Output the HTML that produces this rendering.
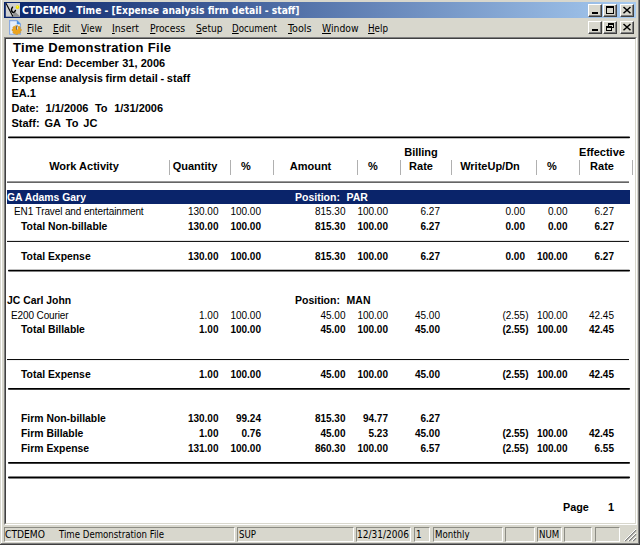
<!DOCTYPE html><html><head><meta charset="utf-8"><title>CTDEMO - Time - [Expense analysis firm detail - staff]</title><style>
html,body{margin:0;padding:0}
body{width:640px;height:545px;overflow:hidden;background:#d8d7cd;position:relative;font-family:"Liberation Sans",sans-serif;color:#000}
div,span{position:absolute;white-space:nowrap;box-sizing:border-box}
.ui{font-family:"DejaVu Sans Condensed","DejaVu Sans","Liberation Sans",sans-serif;font-size:11px;line-height:13px}
.r{font-family:"Liberation Sans",sans-serif;font-size:11px;line-height:13px}
.b{font-weight:bold}
.n{text-align:right}
.c{text-align:center}
.vs{background:#b0b0b0;width:1px;top:160px;height:15px}
.btn{background:#d8d7cd;border:1px solid;border-color:#fff #404040 #404040 #fff;box-shadow:inset -1px -1px 0 #808080}
u{text-decoration:underline}
</style></head><body>
<div style="left:1px;top:0;width:1px;height:544px;background:#fff"></div>
<div style="left:638px;top:0;width:1px;height:545px;background:#808080"></div>
<div style="left:639px;top:0;width:1px;height:545px;background:#404040"></div>
<div style="left:0;top:544px;width:640px;height:1px;background:#404040"></div>
<div style="left:1px;top:543px;width:638px;height:1px;background:#808080"></div>
<div style="left:4px;top:2px;width:632px;height:16px;background:linear-gradient(to right,#0a246a 0%,#a6caf0 100%)"></div>
<svg style="position:absolute;left:5px;top:3px" width="15" height="14" viewBox="0 0 15 14"><rect x="0.8" y="0" width="14.200" height="13.700" fill="#d0d0d0"/><polygon points="8.9,7.7 15,13.3 15,13.7 7.9,13.7" fill="#8e8e8e"/><path d="M1 0.3 L7.9 13.500" stroke="#000" stroke-width="1.100" fill="none"/><path d="M7.5 4.200 Q6.1 6.300 6.5 7.400 Q7.500 9.900 8.700 9.300 Q9.900 8.700 10.400 7.400" stroke="#000" stroke-width="1.500" fill="none" stroke-linecap="round"/><circle cx="12.500" cy="4.100" r="1.850" fill="#f4e200"/><circle cx="12.300" cy="3.800" r="0.800" fill="#fff45a"/></svg>
<div class="ui b" style="left:21.5px;top:4px;color:#fff;font-size:11px;transform:scaleX(0.9293);transform-origin:0 0;">CTDEMO - Time - [Expense analysis firm detail - staff]</div>
<div class="btn" style="left:588px;top:4px;width:14px;height:13px"></div>
<div style="left:592px;top:12px;width:6px;height:2px;background:#000"></div>
<div class="btn" style="left:603px;top:4px;width:14px;height:13px"></div>
<div style="left:606px;top:6px;width:8px;height:8px;border:1px solid #000;border-top-width:2px"></div>
<div class="btn" style="left:620px;top:4px;width:14px;height:13px"></div>
<svg style="position:absolute;left:620px;top:4px" width="14" height="13" viewBox="0 0 14 13"><path d="M3.5 3 L10.5 9.300 M10.5 3 L3.5 9.300" stroke="#000" stroke-width="1.500" fill="none"/></svg>
<div class="btn" style="left:588px;top:21px;width:14px;height:13px"></div>
<div style="left:592px;top:29px;width:6px;height:2px;background:#000"></div>
<div class="btn" style="left:603px;top:21px;width:14px;height:13px"></div>
<div style="left:608px;top:23px;width:6px;height:5px;border:1px solid #000;border-top-width:2px"></div>
<div style="left:606px;top:26px;width:6px;height:5px;border:1px solid #000;border-top-width:2px;background:#d8d7cd"></div>
<div class="btn" style="left:620px;top:21px;width:14px;height:13px"></div>
<svg style="position:absolute;left:620px;top:21px" width="14" height="13" viewBox="0 0 14 13"><path d="M3.5 3 L10.5 9.300 M10.5 3 L3.5 9.300" stroke="#000" stroke-width="1.500" fill="none"/></svg>
<svg style="position:absolute;left:9px;top:20px" width="14" height="15" viewBox="0 0 14 15"><path d="M0.6 0.6 H8 L11.4 4 V14.300 H0.6 Z" fill="#e6eefb" stroke="#86a8e0" stroke-width="1.100"/><path d="M7.8 0.3 L11.7 4.2 H7.8 Z" fill="#3f8fe8"/><polygon points="12.29,8.97 12.29,11.03 10.94,11.33 10.93,11.35 11.67,12.52 10.22,13.97 9.05,13.23 9.03,13.24 8.73,14.59 6.67,14.59 6.37,13.24 6.35,13.23 5.18,13.97 3.73,12.52 4.47,11.35 4.46,11.33 3.11,11.03 3.11,8.97 4.46,8.67 4.47,8.65 3.73,7.48 5.18,6.03 6.35,6.77 6.37,6.76 6.67,5.41 8.73,5.41 9.03,6.76 9.05,6.77 10.22,6.03 11.67,7.48 10.93,8.65 10.94,8.67" fill="#eca41e" stroke="#c88a18" stroke-width="0.4"/><rect x="7.100" y="6" width="1.300" height="3.800" fill="#5a6478"/><rect x="8.2" y="6.5" width="0.800" height="3" fill="#e8ecf4"/></svg>
<div class="ui" style="left:27px;top:22px;color:#000;font-size:11px;transform:scaleX(0.9403);transform-origin:0 0;"><u>F</u>ile</div>
<div class="ui" style="left:52.5px;top:22px;color:#000;font-size:11px;transform:scaleX(0.9128);transform-origin:0 0;"><u>E</u>dit</div>
<div class="ui" style="left:80.5px;top:22px;color:#000;font-size:11px;transform:scaleX(0.8948);transform-origin:0 0;"><u>V</u>iew</div>
<div class="ui" style="left:112px;top:22px;color:#000;font-size:11px;transform:scaleX(0.9510);transform-origin:0 0;"><u>I</u>nsert</div>
<div class="ui" style="left:149.5px;top:22px;color:#000;font-size:11px;transform:scaleX(0.9333);transform-origin:0 0;"><u>P</u>rocess</div>
<div class="ui" style="left:195.5px;top:22px;color:#000;font-size:11px;transform:scaleX(0.9197);transform-origin:0 0;"><u>S</u>etup</div>
<div class="ui" style="left:231.5px;top:22px;color:#000;font-size:11px;transform:scaleX(0.8775);transform-origin:0 0;"><u>D</u>ocument</div>
<div class="ui" style="left:287.5px;top:22px;color:#000;font-size:11px;transform:scaleX(0.9716);transform-origin:0 0;"><u>T</u>ools</div>
<div class="ui" style="left:321.5px;top:22px;color:#000;font-size:11px;transform:scaleX(0.9359);transform-origin:0 0;"><u>W</u>indow</div>
<div class="ui" style="left:367.5px;top:22px;color:#000;font-size:11px;transform:scaleX(0.8858);transform-origin:0 0;"><u>H</u>elp</div>
<div style="left:4px;top:37px;width:633px;height:488px;background:#fff;border:1px solid;border-color:#808080 #fff #fff #808080"></div>
<div style="left:5px;top:38px;width:631px;height:486px;border:1px solid;border-color:#404040 #d8d7cd #d8d7cd #404040"></div>
<div class="r b" style="left:13px;top:40px;font-size:13px;line-height:15px;letter-spacing:0.3px">Time Demonstration File</div>
<div class="r b" style="left:11.5px;top:57px;word-spacing:0.2px">Year End: December 31, 2006</div>
<div class="r b" style="left:11.5px;top:72px;word-spacing:-0.35px">Expense analysis firm detail - staff</div>
<div class="r b" style="left:11.5px;top:87px;word-spacing:0px">EA.1</div>
<div class="r b" style="left:11.5px;top:102px;word-spacing:0.23px">Date:&nbsp; 1/1/2006&nbsp; To&nbsp; 1/31/2006</div>
<div class="r b" style="left:11.5px;top:117px;word-spacing:-0.63px">Staff:&nbsp; GA&nbsp; To&nbsp; JC</div>
<div class="r b c" style="left:34px;width:100px;top:160px;font-size:11px">Work Activity</div>
<div class="r b c" style="left:145px;width:100px;top:160px;font-size:11px">Quantity</div>
<div class="r b c" style="left:196px;width:100px;top:160px;font-size:11px">%</div>
<div class="r b c" style="left:260.5px;width:100px;top:160px;font-size:11px">Amount</div>
<div class="r b c" style="left:323px;width:100px;top:160px;font-size:11px">%</div>
<div class="r b c" style="left:371px;width:100px;top:160px;font-size:11px">Rate</div>
<div class="r b c" style="left:440px;width:100px;top:160px;font-size:11px">WriteUp/Dn</div>
<div class="r b c" style="left:502px;width:100px;top:160px;font-size:11px">%</div>
<div class="r b c" style="left:552px;width:100px;top:160px;font-size:11px">Rate</div>
<div class="r b c" style="left:371px;width:100px;top:146px">Billing</div>
<div class="r b c" style="left:552px;width:100px;top:146px">Effective</div>
<div class="vs" style="left:169px"></div>
<div class="vs" style="left:230px"></div>
<div class="vs" style="left:273px"></div>
<div class="vs" style="left:357px"></div>
<div class="vs" style="left:400px"></div>
<div class="vs" style="left:451px"></div>
<div class="vs" style="left:536px"></div>
<div class="vs" style="left:579px"></div>
<div class="vs" style="left:632px"></div>
<div style="left:7px;top:190px;width:623px;height:14px;background:#0a246a"></div>
<div class="r b" style="left:7px;top:191px;color:#fff;font-size:10.4px">GA Adams Gary</div>
<div class="r b" style="left:295px;top:191px;color:#fff;font-size:10.5px;word-spacing:0.4px">Position:&nbsp; PAR</div>
<div class="r" style="left:14px;top:205px;font-size:10px;letter-spacing:-0.12px;">EN1 Travel and entertainment</div>
<div class="r n" style="left:148.5px;width:70px;top:205px;font-size:10px">130.00</div>
<div class="r n" style="left:191px;width:70px;top:205px;font-size:10px">100.00</div>
<div class="r n" style="left:275.5px;width:70px;top:205px;font-size:10px">815.30</div>
<div class="r n" style="left:318px;width:70px;top:205px;font-size:10px">100.00</div>
<div class="r n" style="left:370px;width:70px;top:205px;font-size:10px">6.27</div>
<div class="r n" style="left:455px;width:70px;top:205px;font-size:10px">0.00</div>
<div class="r n" style="left:497.5px;width:70px;top:205px;font-size:10px">0.00</div>
<div class="r n" style="left:544px;width:70px;top:205px;font-size:10px">6.27</div>
<div class="r b" style="left:21px;top:220px;font-size:10.4px;">Total Non-billable</div>
<div class="r b n" style="left:148.5px;width:70px;top:220px;font-size:10px">130.00</div>
<div class="r b n" style="left:191px;width:70px;top:220px;font-size:10px">100.00</div>
<div class="r b n" style="left:275.5px;width:70px;top:220px;font-size:10px">815.30</div>
<div class="r b n" style="left:318px;width:70px;top:220px;font-size:10px">100.00</div>
<div class="r b n" style="left:370px;width:70px;top:220px;font-size:10px">6.27</div>
<div class="r b n" style="left:455px;width:70px;top:220px;font-size:10px">0.00</div>
<div class="r b n" style="left:497.5px;width:70px;top:220px;font-size:10px">0.00</div>
<div class="r b n" style="left:544px;width:70px;top:220px;font-size:10px">6.27</div>
<div class="r b" style="left:21px;top:250px;font-size:10.4px;">Total Expense</div>
<div class="r b n" style="left:148.5px;width:70px;top:250px;font-size:10px">130.00</div>
<div class="r b n" style="left:191px;width:70px;top:250px;font-size:10px">100.00</div>
<div class="r b n" style="left:275.5px;width:70px;top:250px;font-size:10px">815.30</div>
<div class="r b n" style="left:318px;width:70px;top:250px;font-size:10px">100.00</div>
<div class="r b n" style="left:370px;width:70px;top:250px;font-size:10px">6.27</div>
<div class="r b n" style="left:455px;width:70px;top:250px;font-size:10px">0.00</div>
<div class="r b n" style="left:497.5px;width:70px;top:250px;font-size:10px">100.00</div>
<div class="r b n" style="left:544px;width:70px;top:250px;font-size:10px">6.27</div>
<div class="r b" style="left:7px;top:294px;font-size:10.4px">JC Carl John</div>
<div class="r b" style="left:295px;top:294px;font-size:10.5px;word-spacing:0.4px">Position:&nbsp; MAN</div>
<div class="r" style="left:11px;top:309px;font-size:10px;letter-spacing:-0.12px;">E200 Courier</div>
<div class="r n" style="left:148.5px;width:70px;top:309px;font-size:10px">1.00</div>
<div class="r n" style="left:191px;width:70px;top:309px;font-size:10px">100.00</div>
<div class="r n" style="left:275.5px;width:70px;top:309px;font-size:10px">45.00</div>
<div class="r n" style="left:318px;width:70px;top:309px;font-size:10px">100.00</div>
<div class="r n" style="left:370px;width:70px;top:309px;font-size:10px">45.00</div>
<div class="r n" style="left:458.5px;width:70px;top:309px;font-size:10px">(2.55)</div>
<div class="r n" style="left:497.5px;width:70px;top:309px;font-size:10px">100.00</div>
<div class="r n" style="left:544px;width:70px;top:309px;font-size:10px">42.45</div>
<div class="r b" style="left:21px;top:323px;font-size:10.4px;">Total Billable</div>
<div class="r b n" style="left:148.5px;width:70px;top:323px;font-size:10px">1.00</div>
<div class="r b n" style="left:191px;width:70px;top:323px;font-size:10px">100.00</div>
<div class="r b n" style="left:275.5px;width:70px;top:323px;font-size:10px">45.00</div>
<div class="r b n" style="left:318px;width:70px;top:323px;font-size:10px">100.00</div>
<div class="r b n" style="left:370px;width:70px;top:323px;font-size:10px">45.00</div>
<div class="r b n" style="left:458.5px;width:70px;top:323px;font-size:10px">(2.55)</div>
<div class="r b n" style="left:497.5px;width:70px;top:323px;font-size:10px">100.00</div>
<div class="r b n" style="left:544px;width:70px;top:323px;font-size:10px">42.45</div>
<div class="r b" style="left:21px;top:368px;font-size:10.4px;">Total Expense</div>
<div class="r b n" style="left:148.5px;width:70px;top:368px;font-size:10px">1.00</div>
<div class="r b n" style="left:191px;width:70px;top:368px;font-size:10px">100.00</div>
<div class="r b n" style="left:275.5px;width:70px;top:368px;font-size:10px">45.00</div>
<div class="r b n" style="left:318px;width:70px;top:368px;font-size:10px">100.00</div>
<div class="r b n" style="left:370px;width:70px;top:368px;font-size:10px">45.00</div>
<div class="r b n" style="left:458.5px;width:70px;top:368px;font-size:10px">(2.55)</div>
<div class="r b n" style="left:497.5px;width:70px;top:368px;font-size:10px">100.00</div>
<div class="r b n" style="left:544px;width:70px;top:368px;font-size:10px">42.45</div>
<div class="r b" style="left:21px;top:412px;font-size:10.4px;">Firm Non-billable</div>
<div class="r b n" style="left:148.5px;width:70px;top:412px;font-size:10px">130.00</div>
<div class="r b n" style="left:191px;width:70px;top:412px;font-size:10px">99.24</div>
<div class="r b n" style="left:275.5px;width:70px;top:412px;font-size:10px">815.30</div>
<div class="r b n" style="left:318px;width:70px;top:412px;font-size:10px">94.77</div>
<div class="r b n" style="left:370px;width:70px;top:412px;font-size:10px">6.27</div>
<div class="r b" style="left:21px;top:427px;font-size:10.4px;">Firm Billable</div>
<div class="r b n" style="left:148.5px;width:70px;top:427px;font-size:10px">1.00</div>
<div class="r b n" style="left:191px;width:70px;top:427px;font-size:10px">0.76</div>
<div class="r b n" style="left:275.5px;width:70px;top:427px;font-size:10px">45.00</div>
<div class="r b n" style="left:318px;width:70px;top:427px;font-size:10px">5.23</div>
<div class="r b n" style="left:370px;width:70px;top:427px;font-size:10px">45.00</div>
<div class="r b n" style="left:458.5px;width:70px;top:427px;font-size:10px">(2.55)</div>
<div class="r b n" style="left:497.5px;width:70px;top:427px;font-size:10px">100.00</div>
<div class="r b n" style="left:544px;width:70px;top:427px;font-size:10px">42.45</div>
<div class="r b" style="left:21px;top:442px;font-size:10.4px;">Firm Expense</div>
<div class="r b n" style="left:148.5px;width:70px;top:442px;font-size:10px">131.00</div>
<div class="r b n" style="left:191px;width:70px;top:442px;font-size:10px">100.00</div>
<div class="r b n" style="left:275.5px;width:70px;top:442px;font-size:10px">860.30</div>
<div class="r b n" style="left:318px;width:70px;top:442px;font-size:10px">100.00</div>
<div class="r b n" style="left:370px;width:70px;top:442px;font-size:10px">6.57</div>
<div class="r b n" style="left:458.5px;width:70px;top:442px;font-size:10px">(2.55)</div>
<div class="r b n" style="left:497.5px;width:70px;top:442px;font-size:10px">100.00</div>
<div class="r b n" style="left:544px;width:70px;top:442px;font-size:10px">6.55</div>
<div class="r b" style="left:563px;top:501px;font-size:10.8px">Page</div>
<div class="r b n" style="left:584px;width:30px;top:501px">1</div>
<svg style="position:absolute;left:0;top:0" width="640" height="545" viewBox="0 0 640 545"><rect x="8" y="136.5" width="622" height="1.8" rx="0.8" fill="#000"/><rect x="7" y="181.6" width="622" height="1" fill="#000"/><rect x="7" y="240.9" width="622" height="1" fill="#000"/><rect x="8" y="269.7" width="622" height="1.8" rx="0.8" fill="#000"/><rect x="7" y="359.05" width="622" height="1" fill="#000"/><rect x="8" y="387.9" width="622" height="1.8" rx="0.8" fill="#000"/><rect x="8" y="461.9" width="622" height="1.8" rx="0.8" fill="#000"/><rect x="8" y="476.6" width="622" height="1.8" rx="0.8" fill="#000"/></svg>
<div style="left:4px;top:527px;width:231px;height:15px;border:1px solid;border-color:#8c8c84 #fff #fff #8c8c84"></div>
<div class="ui" style="left:5px;top:528px;color:#000;font-size:11px;transform:scaleX(0.9265);transform-origin:0 0;">CTDEMO</div>
<div class="ui" style="left:58.5px;top:528px;color:#000;font-size:11px;transform:scaleX(0.8695);transform-origin:0 0;">Time Demonstration File</div>
<div style="left:237px;top:527px;width:117px;height:15px;border:1px solid;border-color:#8c8c84 #fff #fff #8c8c84"></div>
<div class="ui" style="left:239px;top:528px;color:#000;font-size:11px;transform:scaleX(0.8700);transform-origin:0 0;">SUP</div>
<div style="left:356px;top:527px;width:55px;height:15px;border:1px solid;border-color:#8c8c84 #fff #fff #8c8c84"></div>
<div class="ui" style="left:357px;top:528px;color:#000;font-size:11px;transform:scaleX(0.9118);transform-origin:0 0;">12/31/2006</div>
<div style="left:414px;top:527px;width:16px;height:15px;border:1px solid;border-color:#8c8c84 #fff #fff #8c8c84"></div>
<div class="ui" style="left:416px;top:528px;color:#000;font-size:11px;transform:scaleX(0.8700);transform-origin:0 0;">1</div>
<div style="left:433px;top:527px;width:70px;height:15px;border:1px solid;border-color:#8c8c84 #fff #fff #8c8c84"></div>
<div class="ui" style="left:435px;top:528px;color:#000;font-size:11px;transform:scaleX(0.8700);transform-origin:0 0;">Monthly</div>
<div style="left:505px;top:527px;width:30px;height:15px;border:1px solid;border-color:#8c8c84 #fff #fff #8c8c84"></div>
<div style="left:537px;top:527px;width:25px;height:15px;border:1px solid;border-color:#8c8c84 #fff #fff #8c8c84"></div>
<div class="ui" style="left:539px;top:528px;color:#000;font-size:11px;transform:scaleX(0.8700);transform-origin:0 0;">NUM</div>
<div style="left:564px;top:527px;width:28px;height:15px;border:1px solid;border-color:#8c8c84 #fff #fff #8c8c84"></div>
<div style="left:595px;top:527px;width:25px;height:15px;border:1px solid;border-color:#8c8c84 #fff #fff #8c8c84"></div>
<svg style="position:absolute;left:624px;top:529px" width="13" height="13" viewBox="0 0 13 13"><path d="M12 1 L1 12 M12 5 L5 12 M12 9 L9 12" stroke="#808080" stroke-width="1.500"/><path d="M12 0 L0 12 M12 4 L4 12 M12 8 L8 12" stroke="#fff" stroke-width="1"/></svg>
</body></html>
